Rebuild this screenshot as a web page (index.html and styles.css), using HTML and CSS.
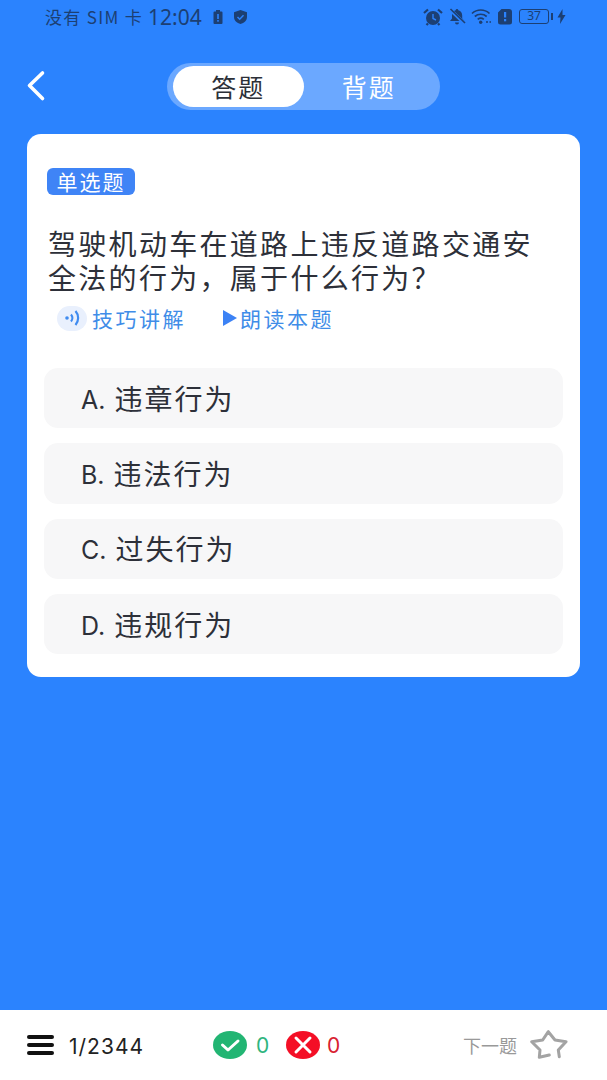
FILE: index.html
```html
<!doctype html>
<html lang="zh-CN">
  <head>
    <meta charset="utf-8">
    <meta name="viewport" content="width=device-width, initial-scale=1">
    <title>答题</title>
    <link rel="stylesheet" href="styles.css">
  </head>
  <body>
    <div class="page">
      <div class="statusbar">
        <div class="status-left">
          <span class="carrier">没有 SIM 卡</span>
          <span class="clock">12:04</span>
          <svg class="ico-sm" width="12" height="16" viewBox="0 0 12 16"><path d="M4 1h4v1.500h1.500a1 1 0 0 1 1 1V14a1 1 0 0 1-1 1h-7a1 1 0 0 1-1-1V3.500a1 1 0 0 1 1-1H4z" fill="#1c3f73"/><rect x="5.200" y="5" width="1.600" height="5" fill="#2b83fe"/><rect x="5.200" y="11" width="1.600" height="1.700" fill="#2b83fe"/></svg>
          <svg class="ico-shield" width="15" height="16" viewBox="0 0 15 16"><path d="M7.500 1L14 3.300V8c0 3.500-2.800 6-6.500 7C3.800 14 1 11.500 1 8V3.300z" fill="#1c3f73"/><path d="M4.500 8l2.200 2.200 3.800-4" fill="none" stroke="#2b83fe" stroke-width="1.500"/></svg>
        </div>
        <div class="status-right">
          <svg width="20" height="18" viewBox="0 0 20 18"><circle cx="10" cy="10" r="7" fill="#1c3f73"/><path d="M1 5l4-3.500M19 5l-4-3.500M5 15.500L3.500 17M15 15.500l1.500 1.500" stroke="#1c3f73" stroke-width="2.200" fill="none"/><path d="M10 6v4.500l3 1.500" stroke="#2b83fe" stroke-width="1.400" fill="none"/></svg>
          <svg width="18" height="17" viewBox="0 0 18 17"><path d="M9 1a1.300 1.300 0 0 1 1.300 1.300c2.700.6 3.900 2.700 3.900 5.200v3l2 2.500H2l2-2.500v-3c0-2.500 1.200-4.600 3.700-5.200A1.300 1.300 0 0 1 9 1zM7 14.500h4a2 2 0 0 1-4 0z" fill="#1c3f73"/><path d="M2 1.500l14.500 14" stroke="#2b83fe" stroke-width="3.400"/><path d="M2.500 1l14.500 14" stroke="#1c3f73" stroke-width="1.600"/></svg>
          <svg width="21" height="17" viewBox="0 0 21 17"><g fill="none" stroke="#1c3f73" stroke-width="1.700"><path d="M1 5.500c5-4.700 12.500-4.700 17.500 0"/><path d="M3.800 8.500c3.400-3 8.500-3 11.900 0"/><path d="M6.700 11.300c2-1.600 4.100-1.600 6.100 0"/></g><circle cx="9.700" cy="14.300" r="1.700" fill="#1c3f73"/><path d="M15 14h2M18.500 14h1.500" stroke="#1c3f73" stroke-width="1.500"/></svg>
          <svg width="16" height="17" viewBox="0 0 16 17"><path d="M4.500 1H12a3 3 0 0 1 3 3v10a2.500 2.500 0 0 1-2.500 2.500h-9A2.500 2.500 0 0 1 1 14V4.500z" fill="#1c3f73"/><rect x="7" y="4" width="2.200" height="5.500" fill="#2b83fe"/><rect x="7" y="11" width="2.200" height="2.300" fill="#2b83fe"/></svg>
          <div class="battery"><div class="battery-body">37</div><div class="battery-tip"></div></div>
          <svg class="bolt" width="9" height="15" viewBox="0 0 9 15"><path d="M5.500 0L.5 8.500h3L3 15l5.500-9h-3z" fill="#1c3f73"/></svg>
        </div>
      </div>

      <div class="topbar">
        <svg class="back" width="22" height="32" viewBox="0 0 22 32"><path d="M17.500 3L4.500 15.500 17.500 28.500" fill="none" stroke="#fff" stroke-width="3.600" stroke-linecap="round" stroke-linejoin="round"/></svg>
        <div class="tabs">
          <div class="tab active">答题</div>
          <div class="tab">背题</div>
        </div>
      </div>

      <div class="card">
        <span class="badge">单选题</span>
        <p class="question">驾驶机动车在道路上违反道路交通安全法的行为，属于什么行为？</p>
        <div class="tools">
          <div class="tool">
            <span class="sound">
              <svg width="20" height="18" viewBox="0 0 20 18"><circle cx="5" cy="9" r="1.800" fill="#3f8bf0"/><path d="M9 5.500c1.700 2.100 1.700 4.900 0 7" fill="none" stroke="#3f8bf0" stroke-width="2"/><path d="M13.500 2c3.500 4 3.500 10 0 14" fill="none" stroke="#3f8bf0" stroke-width="2.200"/></svg>
            </span>
            <span>技巧讲解</span>
          </div>
          <div class="tool read">
            <span class="play"></span>
            <span>朗读本题</span>
          </div>
        </div>
        <div class="options">
          <div class="option"><span class="opt-key">A.</span>违章行为</div>
          <div class="option"><span class="opt-key">B.</span>违法行为</div>
          <div class="option"><span class="opt-key">C.</span>过失行为</div>
          <div class="option"><span class="opt-key">D.</span>违规行为</div>
        </div>
      </div>

      <div class="spacer"></div>

      <div class="footer">
        <div class="menu"><span></span><span></span><span></span></div>
        <div class="count">1/2344</div>
        <div class="score right">
          <svg width="34" height="28" viewBox="0 0 34 28"><ellipse cx="17" cy="14" rx="17" ry="14" fill="#22b573"/><path d="M9.500 14l5.500 5 10-9" fill="none" stroke="#fff" stroke-width="3" stroke-linecap="round" stroke-linejoin="round"/></svg>
          <span>0</span>
        </div>
        <div class="score wrong">
          <svg width="34" height="28" viewBox="0 0 34 28"><ellipse cx="17" cy="14" rx="17" ry="14" fill="#f40f26"/><path d="M10 7l14 14M24 7L10 21" fill="none" stroke="#fff" stroke-width="3" stroke-linecap="round"/></svg>
          <span>0</span>
        </div>
        <div class="next">下一题</div>
        <svg class="star" width="38" height="30" viewBox="0 0 38 30"><path d="M29.300 26.700L28.300 20 36 11.700 25 10 18.300 1.700 12.700 10 1.700 11.700 10 20 9.300 27.300 19.300 25" fill="none" stroke="#a3a3a3" stroke-width="3" stroke-linecap="round" stroke-linejoin="round"/></svg>
      </div>
    </div>
  </body>
</html>
```

FILE: styles.css
```css
* {
  box-sizing: border-box;
}
html, body {
  margin: 0;
  padding: 0;
}
body {
  background: #2b83fe;
  font-family: "Noto Sans CJK SC", "Noto Sans", sans-serif;
}
.page {
  width: 607px;
  height: 1080px;
  display: flex;
  flex-direction: column;
  overflow: hidden;
}
.statusbar {
  height: 33px;
  display: flex;
  justify-content: space-between;
  align-items: center;
  padding: 0 41px 0 45px;
  color: #1c3f73;
}
.status-left {
  display: flex;
  align-items: center;
}
.carrier {
  font-size: 17px;
  letter-spacing: 1.300px;
  width: 103px;
  white-space: nowrap;
}
.clock {
  font-size: 21px;
  font-family: "Noto Sans", sans-serif;
  width: 64px;
}
.ico-shield {
  margin-left: 9px;
}
.status-right {
  display: flex;
  align-items: center;
  gap: 5px;
}
.battery {
  display: flex;
  align-items: center;
  margin-left: 1px;
}
.battery-body {
  width: 30px;
  height: 15px;
  border: 1.500px solid #1c3f73;
  border-radius: 3px;
  font-size: 12px;
  line-height: 12px;
  text-align: center;
  font-family: "Noto Sans", sans-serif;
}
.battery-tip {
  width: 2px;
  height: 7px;
  margin-left: 2px;
  background: #1c3f73;
}
.bolt {
  margin-left: -1px;
}
.topbar {
  height: 101px;
  display: flex;
  justify-content: center;
  align-items: flex-start;
  padding-top: 30px;
  position: relative;
}
.back {
  position: absolute;
  left: 25px;
  top: 37px;
}
.tabs {
  width: 273px;
  height: 47px;
  padding: 3px 6px;
  display: flex;
  border-radius: 24px;
  background: #6ba8ff;
}
.tab {
  width: 131px;
  height: 41px;
  border-radius: 21px;
  text-align: center;
  font-size: 25px;
  line-height: 40px;
  letter-spacing: 2px;
  color: #fff;
}
.tab.active {
  background: #fff;
  color: #2c3038;
}
.card {
  margin: 0 27px;
  height: 543px;
  padding: 34px 17px 0;
  background: #fff;
  border-radius: 14px;
}
.badge {
  display: block;
  width: 88px;
  height: 27px;
  margin-left: 3px;
  border-radius: 6px;
  background: #3f84f6;
  color: #fff;
  font-size: 21px;
  line-height: 27px;
  text-align: center;
  letter-spacing: 2px;
}
.question {
  width: 500px;
  margin: 31px 0 0 4px;
  color: #2d3039;
  font-size: 28px;
  line-height: 34px;
  letter-spacing: 2.300px;
}
.tools {
  height: 34px;
  margin: 7px 0 0 13px;
  display: flex;
  align-items: center;
  color: #3f8de8;
  font-size: 21px;
  letter-spacing: 2.500px;
}
.tool {
  display: flex;
  align-items: center;
}
.sound {
  width: 30px;
  height: 25px;
  margin-right: 5px;
  border-radius: 13px;
  background: #e9f0fd;
  display: flex;
  align-items: center;
  justify-content: center;
}
.read {
  margin-left: 37px;
}
.play {
  width: 0;
  height: 0;
  margin-right: 3px;
  border-left: 14px solid #3c82f5;
  border-top: 8px solid transparent;
  border-bottom: 8px solid transparent;
}
.options {
  margin-top: 33px;
  display: flex;
  flex-direction: column;
  gap: 15px;
}
.option {
  height: 60.300px;
  padding: 0 0 1px 37px;
  display: flex;
  align-items: center;
  background: #f7f7f8;
  border-radius: 14px;
  color: #2d3039;
  font-size: 28px;
  letter-spacing: 2px;
}
.opt-key {
  padding-top: 4px;
  font-size: 25px;
  font-family: "Inter", sans-serif;
  letter-spacing: 0;
  margin-right: 9px;
}
.spacer {
  flex: 1;
}
.footer {
  height: 70px;
  background: #fff;
  display: flex;
  align-items: center;
  padding-left: 27px;
  position: relative;
}
.menu {
  width: 27px;
  height: 20px;
  display: flex;
  flex-direction: column;
  justify-content: space-between;
}
.menu span {
  height: 4px;
  border-radius: 2px;
  background: #111;
}
.count {
  width: 144px;
  margin-left: 15px;
  padding-top: 3px;
  font-family: "Inter", sans-serif;
  font-size: 21px;
  letter-spacing: 1px;
  color: #222;
}
.score {
  display: flex;
  align-items: center;
  gap: 9px;
  font-family: "Inter", sans-serif;
  font-size: 21px;
}
.score.right {
  color: #2fb57e;
  width: 73px;
}
.score.wrong {
  color: #d8202f;
  gap: 7px;
}
.next {
  margin-left: auto;
  font-size: 18px;
  color: #999;
}
.star {
  margin: 0 39px 0 13px;
}
```
